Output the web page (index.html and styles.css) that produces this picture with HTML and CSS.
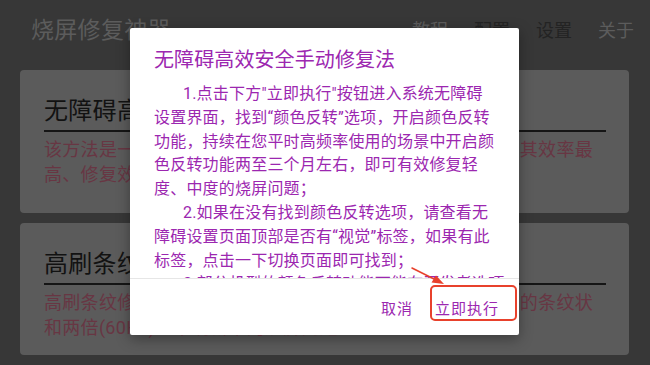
FILE: index.html
```html
<!DOCTYPE html>
<html lang="zh-CN">
<head>
<meta charset="utf-8">
<title>烧屏修复神器</title>
<link rel="stylesheet" href="styles.css">
</head>
<body>
<div class="app">
  <header class="appbar">
    <div class="appbar-title">烧屏修复神器</div>
    <nav class="appbar-menu">
      <span class="menu-item">教程</span>
      <span class="menu-item menu-item--dark">配置</span>
      <span class="menu-item menu-item--dark">设置</span>
      <span class="menu-item">关于</span>
    </nav>
  </header>
  <main class="list">
    <section class="card card--tall">
      <h2 class="card-title">无障碍高效安全手动修复法</h2>
      <p class="card-desc">该方法是一种通过开启系统颜色反转功能进行修复的方法，其效率最高、修复效果最好，但需要较长的时间。</p>
    </section>
    <section class="card card--short">
      <h2 class="card-title">高刷条纹修复法</h2>
      <p class="card-desc">高刷条纹修复法用于修复手机屏幕在高刷新率模式下所出现的条纹状和两倍(60Hz)以下刷新率的烧屏问题。</p>
    </section>
  </main>
</div>

<div class="dialog">
  <div class="dialog-content">
    <h1 class="dialog-title">无障碍高效安全手动修复法</h1>
    <div class="dialog-body">
      <p class="para">1.点击下方"立即执行"按钮进入系统无障碍<br>设置界面，找到“颜色反转”选项，开启颜色反转<br>功能，持续在您平时高频率使用的场景中开启颜<br>色反转功能两至三个月左右，即可有效修复轻<br>度、中度的烧屏问题；</p>
      <p class="para">2.如果在没有找到颜色反转选项，请查看无<br>障碍设置页面顶部是否有“视觉”标签，如果有此<br>标签，点击一下切换页面即可找到；</p>
      <p class="para">3.部分机型的颜色反转功能可能在开发者选项<br>中，请自行查找。</p>
    </div>
  </div>
  <div class="dialog-actions">
    <button class="dialog-btn">取消</button>
    <button class="dialog-btn">立即执行</button>
  </div>
</div>

<div class="mark-box"></div>
<svg class="mark-arrow" width="40" height="24" viewBox="0 0 40 24">
  <line x1="1" y1="1" x2="27" y2="14" stroke="#e8412c" stroke-width="1.6" stroke-linecap="round"/>
  <polygon points="33,17 25,8.5 20.5,15.5" fill="#e8412c"/>
</svg>
</body>
</html>
```
FILE: styles.css
```css
* { box-sizing: border-box; }
html, body { margin: 0; padding: 0; }
body {
  width: 650px;
  height: 365px;
  overflow: hidden;
  background: #373737;
  font-family: Roboto, "Noto Sans CJK SC", sans-serif;
  position: relative;
}
.app { width: 650px; }
.appbar {
  height: 62px;
  display: flex;
  align-items: center;
  justify-content: space-between;
  padding: 0 16px 0 31px;
}
.appbar-title {
  font-size: 23px;
  letter-spacing: 0.3px;
  color: #5c5c5c;
  line-height: 30px;
}
.appbar-menu {
  display: flex;
  gap: 26px;
}
.menu-item {
  font-size: 18px;
  line-height: 24px;
  color: #5c5c5c;
}
.menu-item--dark { color: #232323; }

.list {
  display: flex;
  flex-direction: column;
  gap: 10px;
  padding: 8px 21px 0 20px;
}
.card {
  background: #5b5b5b;
  border-radius: 4px;
  padding: 26px 23px 0 24px;
}
.card--tall { height: 143px; }
.card--short { height: 132px; }
.card-title {
  margin: 0;
  font-size: 24px;
  font-weight: normal;
  line-height: 30px;
  letter-spacing: 0.3px;
  color: #121212;
  padding-bottom: 4px;
  border-bottom: 2px solid #151515;
  white-space: nowrap;
  overflow: hidden;
}
.card-desc {
  margin: 6px 0 0;
  font-size: 18px;
  line-height: 24.5px;
  letter-spacing: 0.3px;
  color: #683643;
}

.dialog {
  position: absolute;
  left: 130px;
  top: 28px;
  width: 389px;
  height: 307px;
  background: #ffffff;
  border-radius: 2px;
  box-shadow: 0 4px 14px rgba(0,0,0,0.35);
  display: flex;
  flex-direction: column;
}
.dialog-content {
  height: 251px;
  overflow: hidden;
  padding: 18px 10px 0 24px;
  border-bottom: 1px solid #e6e6e6;
}
.dialog-title {
  margin: 0;
  font-size: 20px;
  font-weight: normal;
  line-height: 28px;
  letter-spacing: 0.1px;
  color: #9c27b0;
}
.dialog-body {
  margin-top: 8px;
  color: #9c27b0;
  font-size: 16px;
  line-height: 23.8px;
  letter-spacing: 0.2px;
  width: 355px;
}
.para {
  margin: 0;
  text-indent: 29px;
}
.dialog-actions {
  flex: 1;
  display: flex;
  align-items: center;
  justify-content: flex-end;
  gap: 22px;
  padding: 3px 20px 0 0;
}
.dialog-btn {
  border: 0;
  background: none;
  padding: 0;
  margin: 0;
  font-family: Roboto, "Noto Sans CJK SC", sans-serif;
  font-size: 15px;
  letter-spacing: 1px;
  line-height: 22px;
  color: #9c27b0;
}

.mark-box {
  position: absolute;
  left: 430px;
  top: 285px;
  width: 87px;
  height: 36px;
  border: 2px solid #e8412c;
  border-radius: 5px;
}
.mark-arrow {
  position: absolute;
  left: 411px;
  top: 267px;
}
```
